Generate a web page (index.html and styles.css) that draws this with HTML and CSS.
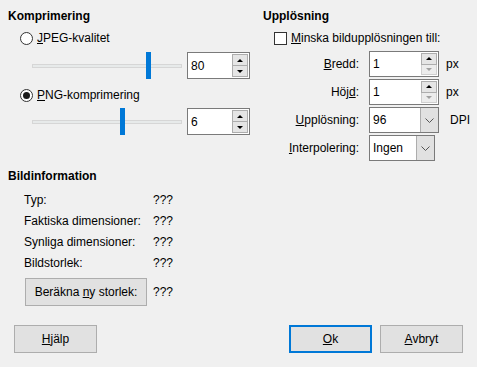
FILE: index.html
```html
<!DOCTYPE html>
<html lang="sv">
<head>
    <meta charset="UTF-8">
    <title>Komprimera bild</title>
    <link rel="stylesheet" href="styles.css">
</head>
<body>
<div class="dialog">
    <div class="top">
        <div class="col-left">
            <div class="section-title">Komprimering</div>
            <div class="option"><span class="radio"></span><span><u>J</u>PEG-kvalitet</span></div>
            <div class="slider-row">
                <div class="slider"><div class="track"></div><div class="thumb" style="left:114px"></div></div>
                <div class="spin"><span class="value">80</span>
                    <div class="spin-btns"><span class="spin-btn"><i class="up"></i></span><span class="spin-btn"><i class="down"></i></span></div>
                </div>
            </div>
            <div class="option png"><span class="radio checked"></span><span><u>P</u>NG-komprimering</span></div>
            <div class="slider-row second">
                <div class="slider"><div class="track"></div><div class="thumb" style="left:88px"></div></div>
                <div class="spin"><span class="value">6</span>
                    <div class="spin-btns"><span class="spin-btn"><i class="up"></i></span><span class="spin-btn"><i class="down"></i></span></div>
                </div>
            </div>

            <!-- Bildinformation -->
            <div class="section-title info-title">Bildinformation</div>
            <div class="info-row first"><span class="info-label">Typ:</span><span>???</span></div>
            <div class="info-row"><span class="info-label">Faktiska dimensioner:</span><span>???</span></div>
            <div class="info-row"><span class="info-label">Synliga dimensioner:</span><span>???</span></div>
            <div class="info-row"><span class="info-label">Bildstorlek:</span><span>???</span></div>
            <div class="calc-row">
                <button class="btn calc-btn">Beräkna <u>n</u>y storlek:</button>
                <span class="calc-value">???</span>
            </div>
        </div>

        <div class="col-right">
            <div class="section-title">Upplösning</div>
            <div class="check-row"><span class="checkbox"></span><span><u>M</u>inska bildupplösningen till:</span></div>
            <div class="field first">
                <span class="field-label"><u>B</u>redd:</span>
                <div class="spin wide"><span class="value">1</span>
                    <div class="spin-btns"><span class="spin-btn"><i class="up"></i></span><span class="spin-btn off"><i class="down"></i></span></div>
                </div>
                <span class="unit">px</span>
            </div>
            <div class="field">
                <span class="field-label">Höj<u>d</u>:</span>
                <div class="spin wide"><span class="value">1</span>
                    <div class="spin-btns"><span class="spin-btn"><i class="up"></i></span><span class="spin-btn off"><i class="down"></i></span></div>
                </div>
                <span class="unit">px</span>
            </div>
            <div class="field">
                <span class="field-label"><u>U</u>pplösning:</span>
                <div class="combo"><span class="value">96</span>
                    <span class="combo-btn"><svg width="9" height="5" viewBox="0 0 9 5"><path d="M0.5 0.5 L4.5 4.5 L8.5 0.5" fill="none" stroke="#555" stroke-width="1"/></svg></span>
                </div>
                <span class="unit dpi">DPI</span>
            </div>
            <div class="field">
                <span class="field-label"><u>I</u>nterpolering:</span>
                <div class="combo short"><span class="value">Ingen</span>
                    <span class="combo-btn"><svg width="9" height="5" viewBox="0 0 9 5"><path d="M0.5 0.5 L4.5 4.5 L8.5 0.5" fill="none" stroke="#555" stroke-width="1"/></svg></span>
                </div>
            </div>
        </div>
    </div>

    <div class="footer">
        <button class="btn"><u>H</u>jälp</button>
        <div class="footer-right">
            <button class="btn default"><u>O</u>k</button>
            <button class="btn"><u>A</u>vbryt</button>
        </div>
    </div>
</div>
</body>
</html>
```

FILE: styles.css
```css
body {
    margin: 0;
    background-color: #f0f0f0;
    font-family: "Liberation Sans", Arial, sans-serif;
    font-size: 12px;
    color: #000;
}
.dialog {
    width: 477px;
    height: 367px;
    padding-top: 9px;
    box-sizing: border-box;
}
.top {
    display: flex;
    align-items: flex-start;
}
.col-left {
    width: 242px;
    padding-left: 8px;
}
.col-right {
    padding-left: 13px;
}
.section-title {
    font-weight: bold;
    height: 15px;
    line-height: 15px;
}
.option, .check-row {
    display: flex;
    align-items: center;
    height: 16px;
    margin-top: 6px;
    margin-left: 12px;
}
.option.png {
    margin-top: 8px;
}
.check-row {
    margin-left: 11px;
}
.radio, .checkbox {
    width: 13px;
    height: 13px;
    border: 1px solid #333;
    background: #fff;
    box-sizing: border-box;
    margin-right: 4px;
    display: flex;
    align-items: center;
    justify-content: center;
}
.radio {
    border-radius: 50%;
}
.radio.checked::after {
    content: "";
    width: 7px;
    height: 7px;
    border-radius: 50%;
    background: #1b1b1b;
}
.slider-row {
    display: flex;
    align-items: center;
    margin-top: 6px;
    margin-left: 24px;
}
.slider-row.second {
    margin-top: 5px;
}
.slider {
    position: relative;
    width: 150px;
    height: 27px;
    margin-right: 5px;
    display: flex;
    align-items: center;
}
.track {
    width: 100%;
    height: 4px;
    margin-top: 1px;
    background: #e7eaea;
    border: 1px solid #d6d6d6;
    box-sizing: border-box;
}
.thumb {
    position: absolute;
    top: 0;
    width: 5px;
    height: 27px;
    background: #0078d7;
}
.spin, .combo {
    display: flex;
    align-items: center;
    width: 63px;
    height: 27px;
    border: 1px solid #7a7a7a;
    background: #fff;
    box-sizing: border-box;
}
.spin.wide, .combo {
    width: 70px;
    height: 26px;
}
.combo.short {
    width: 66px;
}
.value {
    flex: 1;
    padding-left: 3px;
}
.spin-btns {
    display: flex;
    flex-direction: column;
    width: 16px;
    height: 23px;
    margin-right: 1px;
}
.spin.wide .spin-btns {
    height: 22px;
}
.spin-btn {
    flex: 1;
    display: flex;
    align-items: center;
    justify-content: center;
    background: #e5e5e5;
    border: 1px solid #adadad;
}
.spin-btn + .spin-btn {
    border-top: none;
}
.spin-btn i {
    width: 0;
    height: 0;
    border-left: 3px solid transparent;
    border-right: 3px solid transparent;
}
.spin-btn .up {
    border-bottom: 3px solid #000;
}
.spin-btn .down {
    border-top: 3px solid #000;
}
.spin-btn.off {
    border-color: #cfcfcf;
    background: #ececec;
}
.spin-btn.off .down {
    border-top-color: #a0a0a0;
}
.combo-btn {
    width: 17px;
    align-self: stretch;
    display: flex;
    align-items: center;
    justify-content: center;
    background: #e1e1e1;
    border-left: 1px solid #adadad;
}
.field {
    display: flex;
    align-items: center;
    height: 26px;
    margin-top: 2px;
}
.field.first {
    margin-top: 5px;
}
.field-label {
    width: 96px;
    text-align: right;
    margin-right: 10px;
}
.unit {
    margin-left: 7px;
}
.unit.dpi {
    margin-left: 11px;
}
.info-title {
    margin-top: 34px;
}
.info-row {
    display: flex;
    align-items: center;
    height: 21px;
    padding-left: 16px;
}
.info-row.first {
    margin-top: 5px;
}
.info-label {
    width: 129px;
}
.calc-row {
    display: flex;
    align-items: center;
    margin-top: 5px;
    margin-left: 17px;
}
.calc-value {
    margin-left: 6px;
}
.btn {
    height: 28px;
    width: 83px;
    border: 1px solid #adadad;
    background: #e1e1e1;
    box-sizing: border-box;
    font: inherit;
    color: #000;
    padding: 0;
}
.calc-btn {
    width: 122px;
}
.btn.default {
    border: 2px solid #0078d7;
}
.footer {
    display: flex;
    justify-content: space-between;
    margin-top: 19px;
    padding: 0 14px;
}
.footer-right {
    display: flex;
    gap: 8px;
}
```
